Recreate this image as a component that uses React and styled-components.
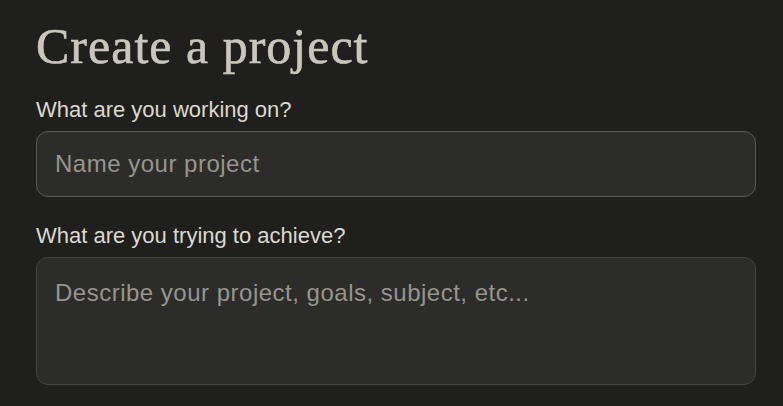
import React from 'react';
import styled, { createGlobalStyle } from 'styled-components';

const GlobalStyle = createGlobalStyle`
  html, body {
    margin: 0;
    background: #1f1f1d;
  }
`;

const Page = styled.div`
  padding: 18px 28px 0 36px;
  font-family: 'Liberation Sans', Arial, sans-serif;
`;

const Title = styled.h1`
  margin: 0 0 24px;
  font-family: 'Liberation Serif', 'Times New Roman', serif;
  font-weight: 400;
  font-size: 50px;
  line-height: 56px;
  letter-spacing: 1px;
  color: #c9c7bb;
  -webkit-text-stroke: 0.6px #c9c7bb;
`;

const Field = styled.label`
  display: flex;
  flex-direction: column;
  gap: 9px;
  margin-bottom: 27px;
`;

const Label = styled.span`
  font-size: 22px;
  line-height: 24px;
  color: #dcd9ce;
`;

const inputBase = `
  box-sizing: border-box;
  width: 720px;
  background: #2c2c2a;
  border-radius: 12px;
  padding: 0 18px;
  font-family: 'Liberation Sans', Arial, sans-serif;
  font-size: 24px;
  letter-spacing: 0.5px;
  color: #e8e6dc;
  outline: none;
  &::placeholder {
    color: #97958c;
  }
`;

const Input = styled.input`
  ${inputBase}
  height: 66px;
  border: 1px solid ${(p) => p.$border};
`;

const TextArea = styled.textarea`
  ${inputBase}
  height: 128px;
  padding-top: 21px;
  line-height: 28px;
  resize: none;
  border: 1px solid ${(p) => p.$border};
`;

export default function App() {
  return (
    <>
      <GlobalStyle />
      <Page>
        <Title>Create a project</Title>
        <Field>
          <Label>What are you working on?</Label>
          <Input $border="#5c5b56" placeholder="Name your project" />
        </Field>
        <Field>
          <Label>What are you trying to achieve?</Label>
          <TextArea
            $border="#464542"
            placeholder="Describe your project, goals, subject, etc..."
          />
        </Field>
      </Page>
    </>
  );
}
